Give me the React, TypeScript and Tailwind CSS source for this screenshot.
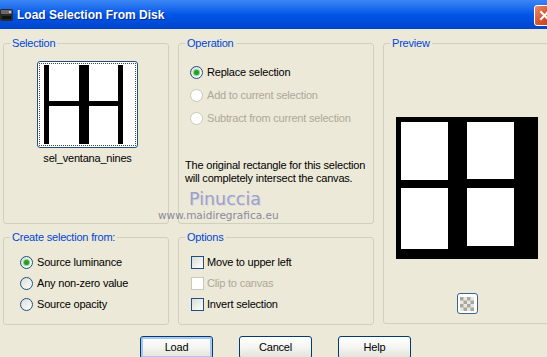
import React from "react";

function Radio({ checked, disabled }: { checked?: boolean; disabled?: boolean }) {
  return (
    <span
      className={
        "w-[13px] h-[13px] rounded-full border flex items-center justify-center shrink-0 " +
        (disabled
          ? "border-[#CAC8BB] bg-white"
          : "border-[#1C5180] bg-linear-to-br from-[#DCDCD7] to-white")
      }
    >
      {checked && (
        <span className="w-[5px] h-[5px] rounded-full bg-[#21A121] shadow-[0_0_0_1px_#8AD38A]" />
      )}
    </span>
  );
}

function Check({ disabled }: { disabled?: boolean }) {
  return (
    <span
      className={
        "w-[13px] h-[13px] border shrink-0 " +
        (disabled
          ? "border-[#CAC8BB] bg-white"
          : "border-[#1C5180] bg-linear-to-br from-[#DCDCD7] to-white")
      }
    />
  );
}

function Group({
  label,
  className,
  children,
}: {
  label: string;
  className: string;
  children?: React.ReactNode;
}) {
  return (
    <div className={"relative border border-[#D0D0BF] rounded-[3px] shrink-0 " + className}>
      <span className="absolute top-[-8px] left-[6px] px-[2px] bg-[#ECE9D8] text-[#0046D5] leading-[14px] whitespace-nowrap">
        {label}
      </span>
      {children}
    </div>
  );
}

function Btn({ label, primary }: { label: string; primary?: boolean }) {
  return (
    <button
      className={
        "w-[73px] h-[23px] border border-[#003C74] rounded-[3px] bg-linear-to-b from-white via-[#F4F4F0] to-[#E3E2DA] text-black text-[11px] leading-[21px] tracking-[-0.2px] " +
        (primary ? "shadow-[inset_0_0_0_2px_#A9C6F2]" : "")
      }
    >
      {label}
    </button>
  );
}

export default function App() {
  return (
    <div className="w-[547px] h-[357px] overflow-hidden bg-[#ECE9D8] relative font-['Liberation_Sans',Arial,sans-serif] text-[11px] tracking-[-0.2px] text-black">
      {/* Title bar */}
      <div className="h-[29px] flex items-start bg-linear-to-b from-[#3A86F5] via-[#0056E8] to-[#0045CC]">
        <svg width="14" height="14" viewBox="0 0 14 14" className="mt-[8px] ml-0 shrink-0">
          <rect x="0" y="1" width="13" height="12" rx="2" fill="#2A2A2A" />
          <rect x="1" y="2" width="11" height="4" rx="1" fill="#6A6A6A" />
          <rect x="2" y="8" width="9" height="3" fill="#111" />
          <rect x="9" y="3" width="2" height="2" fill="#C8C8C8" />
        </svg>
        <span className="ml-[3px] mt-[8px] text-white font-bold text-[12px] tracking-normal leading-[15px] [text-shadow:1px_1px_0_#0A2A8A]">
          Load Selection From Disk
        </span>
        <div className="flex-1" />
        <div className="mt-[5px] mr-[-8px] w-[21px] h-[21px] rounded-[3px] border border-white bg-linear-to-br from-[#E88A6C] via-[#D8562F] to-[#C23A14] flex items-center justify-center shrink-0">
          <svg width="11" height="11" viewBox="0 0 11 11">
            <path d="M2 2 L9 9 M9 2 L2 9" stroke="white" strokeWidth="2" strokeLinecap="square" />
          </svg>
        </div>
      </div>

      {/* Body */}
      <div className="flex pl-[3px] pt-[14px] gap-[9px]">
        <div className="flex flex-col gap-[13px]">
          <div className="flex gap-[9px]">
            <Group label="Selection" className="w-[166px] h-[181px]">
              <div className="pt-[17px] pl-[33px]">
                <div className="flex flex-col items-center w-[101px]">
                  <div className="w-[101px] h-[87px] border border-[#1C5180] rounded-[3px] bg-white p-[1px]">
                    <div className="w-full h-full border border-dotted border-[#444] flex items-center justify-center">
                      <svg width="93" height="79" viewBox="0 0 93 79">
                        <rect x="0" y="0" width="93" height="79" fill="white" />
                        <rect x="3" y="0" width="5" height="79" fill="black" />
                        <rect x="38" y="0" width="10" height="79" fill="black" />
                        <rect x="77" y="0" width="5" height="79" fill="black" />
                        <rect x="8" y="36" width="69" height="5" fill="black" />
                      </svg>
                    </div>
                  </div>
                  <span className="mt-[4px] leading-[13px] whitespace-nowrap">sel_ventana_nines</span>
                </div>
              </div>
            </Group>
            <Group label="Operation" className="w-[196px] h-[181px]">
              <div className="pt-[17px] pl-[11px] flex flex-col">
                <div className="h-[23px] flex items-center gap-[4px]">
                  <Radio checked />
                  <span>Replace selection</span>
                </div>
                <div className="h-[23px] flex items-center gap-[4px] text-[#ACA899]">
                  <Radio disabled />
                  <span>Add to current selection</span>
                </div>
                <div className="h-[23px] flex items-center gap-[4px] text-[#ACA899]">
                  <Radio disabled />
                  <span>Subtract from current selection</span>
                </div>
              </div>
              <p className="mt-[29px] pl-[6px] leading-[12.5px] whitespace-nowrap">
                The original rectangle for this selection
                <br />
                will completely intersect the canvas.
              </p>
            </Group>
          </div>
          <div className="flex gap-[9px]">
            <Group label="Create selection from:" className="w-[166px] h-[88px]">
              <div className="pt-[14px] pl-[16px] flex flex-col">
                <div className="h-[21px] flex items-center gap-[4px]">
                  <Radio checked />
                  <span>Source luminance</span>
                </div>
                <div className="h-[21px] flex items-center gap-[4px]">
                  <Radio />
                  <span>Any non-zero value</span>
                </div>
                <div className="h-[21px] flex items-center gap-[4px]">
                  <Radio />
                  <span>Source opacity</span>
                </div>
              </div>
            </Group>
            <Group label="Options" className="w-[196px] h-[88px]">
              <div className="pt-[14px] pl-[12px] flex flex-col">
                <div className="h-[21px] flex items-center gap-[3px]">
                  <Check />
                  <span>Move to upper left</span>
                </div>
                <div className="h-[21px] flex items-center gap-[3px] text-[#ACA899]">
                  <Check disabled />
                  <span>Clip to canvas</span>
                </div>
                <div className="h-[21px] flex items-center gap-[3px]">
                  <Check />
                  <span>Invert selection</span>
                </div>
              </div>
            </Group>
          </div>
        </div>
        <Group label="Preview" className="w-[180px] h-[281px]">
          <div className="pt-[73px] pl-[12px]">
            <div className="flex flex-col items-center w-[142px]">
              <svg width="142" height="142" viewBox="0 0 142 142">
                <rect x="0" y="0" width="142" height="142" fill="black" />
                <rect x="5" y="5" width="47" height="58" fill="white" />
                <rect x="71" y="5" width="47" height="57" fill="white" />
                <rect x="5" y="71" width="47" height="61" fill="white" />
                <rect x="71" y="71" width="47" height="58" fill="white" />
              </svg>
              <div className="mt-[34px] w-[21px] h-[21px] rounded-[3px] border border-[#3C6396] bg-white flex items-center justify-center">
                <svg width="14" height="14" viewBox="0 0 14 14">
                  <rect x="0" y="0" width="14" height="14" fill="#E8E8E0" />
                  <rect x="0" y="0" width="3.5" height="3.5" fill="#A8A89C" />
                  <rect x="7" y="0" width="3.5" height="3.5" fill="#A8A89C" />
                  <rect x="3.5" y="3.5" width="3.5" height="3.5" fill="#A8A89C" />
                  <rect x="10.5" y="3.5" width="3.5" height="3.5" fill="#A8A89C" />
                  <rect x="0" y="7" width="3.5" height="3.5" fill="#A8A89C" />
                  <rect x="7" y="7" width="3.5" height="3.5" fill="#A8A89C" />
                  <rect x="3.5" y="10.5" width="3.5" height="3.5" fill="#A8A89C" />
                  <rect x="10.5" y="10.5" width="3.5" height="3.5" fill="#A8A89C" />
                </svg>
              </div>
            </div>
          </div>
        </Group>
      </div>

      {/* Buttons */}
      <div className="mt-[11px] pl-[140px] flex gap-[26px]">
        <Btn label="Load" primary />
        <Btn label="Cancel" />
        <Btn label="Help" />
      </div>

      {/* Watermark */}
      <div className="absolute left-[189px] top-[189px] text-[17.5px] leading-[20px] tracking-[0px] font-['DejaVu_Sans',sans-serif] text-[#9FA0C4] [text-shadow:1px_1px_0_#D8D8E8]">
        Pinuccia
      </div>
      <div className="absolute left-[158px] top-[209px] text-[10.5px] leading-[12px] tracking-[0px] font-['DejaVu_Sans',sans-serif] text-[#8A8A98]">
        www.maidiregrafica.eu
      </div>
    </div>
  );
}
